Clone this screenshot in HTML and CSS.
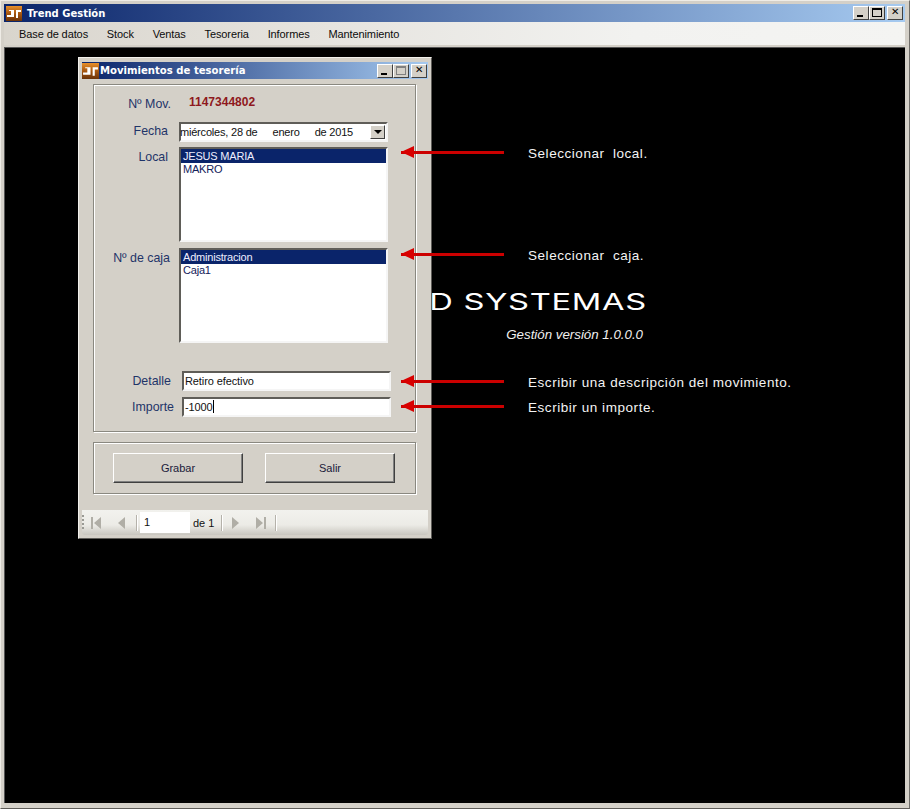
FILE: index.html
```html
<!DOCTYPE html>
<html lang="es">
<head>
<meta charset="utf-8">
<title>Trend Gestión</title>
<link rel="stylesheet" href="styles.css">
</head>
<body>
<svg class="defs" width="0" height="0">
  <defs>
    <linearGradient id="brown" x1="0" y1="0" x2="0" y2="1">
      <stop offset="0" stop-color="#e8902c"/>
      <stop offset="0.5" stop-color="#a8570f"/>
      <stop offset="1" stop-color="#6a3208"/>
    </linearGradient>
    <symbol id="logo" viewBox="0 0 16 15" preserveAspectRatio="none">
      <rect width="16" height="15" fill="url(#brown)"/>
      <path d="M1 9h4V5H3V4h5v7H1zM10 4h5v2h-3v6h-2z" fill="#fff"/>
    </symbol>
  </defs>
</svg>
<div class="app">
  <header class="titlebar">
    <svg class="logo"><use href="#logo"/></svg>
    <span class="title">Trend Gestión</span>
    <div class="wbtns">
      <span class="wbtn"><i class="g-min"></i></span>
      <span class="wbtn"><i class="g-max"></i></span>
      <span class="wbtn"><i class="g-close">✕</i></span>
    </div>
  </header>
  <nav class="menubar">
    <span>Base de datos</span><span>Stock</span><span>Ventas</span><span>Tesoreria</span><span>Informes</span><span>Mantenimiento</span>
  </nav>
  <main class="desk">
    <div class="brand">
      <div class="brand-name">TREND SYSTEMAS</div>
      <div class="brand-ver">Gestión versión 1.0.0.0</div>
    </div>

    <section class="dialog">
      <header class="dlg-title">
        <svg class="logo"><use href="#logo"/></svg>
        <span class="title">Movimientos de tesorería</span>
        <div class="wbtns">
          <span class="wbtn"><i class="g-min"></i></span>
          <span class="wbtn wbtn-off"><i class="g-max"></i></span>
          <span class="wbtn"><i class="g-close">✕</i></span>
        </div>
      </header>
      <div class="dlg-body">
        <div class="group g-main">
          <div class="row r-mov"><label class="lb">Nº Mov.</label><span class="movno">1147344802</span></div>
          <div class="row r-fecha"><label class="lb">Fecha</label>
            <div class="field date"><span class="d1">miércoles, 28 de</span><span class="d2">enero</span><span class="d3">de 2015</span><span class="dd"><i></i></span></div>
          </div>
          <div class="row r-local"><label class="lb">Local</label>
            <div class="field list"><div class="opt sel">JESUS MARIA</div><div class="opt">MAKRO</div></div>
          </div>
          <div class="row r-caja"><label class="lb">Nº de caja</label>
            <div class="field list"><div class="opt sel">Administracion</div><div class="opt">Caja1</div></div>
          </div>
          <div class="row r-det"><label class="lb">Detalle</label><div class="field text">Retiro efectivo</div></div>
          <div class="row r-imp"><label class="lb">Importe</label><div class="field text">-1000<b class="caret"></b></div></div>
        </div>
        <div class="group g-btns">
          <button class="btn">Grabar</button>
          <button class="btn">Salir</button>
        </div>
      </div>
      <footer class="nav">
        <span class="grip"></span>
        <svg class="nv" viewBox="0 0 12 14"><path d="M1 1h2v12H1zM11 1v12L4 7z"/></svg>
        <svg class="nv nv2" viewBox="0 0 12 14"><path d="M10 1v12L3 7z"/></svg>
        <span class="sep"></span>
        <span class="page">1</span>
        <span class="of">de 1</span>
        <span class="sep sep-b"></span>
        <svg class="nv nv3" viewBox="0 0 12 14"><path d="M2 1v12l7-6z"/></svg>
        <svg class="nv nv4" viewBox="0 0 12 14"><path d="M1 1v12l7-6zM9 1h2v12H9z"/></svg>
        <span class="sep sep-end"></span>
      </footer>
    </section>

    <div class="note n1"><span class="arrow"></span><span class="note-t wide">Seleccionar local.</span></div>
    <div class="note n2"><span class="arrow"></span><span class="note-t wide">Seleccionar caja.</span></div>
    <div class="note n3"><span class="arrow"></span><span class="note-t">Escribir una descripción del movimiento.</span></div>
    <div class="note n4"><span class="arrow"></span><span class="note-t">Escribir un importe.</span></div>
  </main>
</div>
</body>
</html>
```
FILE: styles.css
```css
* { box-sizing: border-box; }
html, body { margin: 0; height: 100%; }
body { width: 910px; height: 809px; overflow: hidden; font-family: "Liberation Sans", Arial, sans-serif; background: #d4d0c8; }
.defs { position: absolute; }

.app { width: 910px; height: 809px; display: flex; flex-direction: column; padding: 3px 4px 5px 3px; background: #d4d0c8; border-top: 1px solid #efece6; border-left: 1px solid #efece6; border-right: 1px solid #6e6c68; border-bottom: 1px solid #5e5c58; }

.titlebar { height: 18px; flex: none; display: flex; align-items: center; background: linear-gradient(90deg, #0a246a 0%, #a6caf0 100%); }
.logo { width: 16px; height: 15px; flex: none; margin-left: 2px; }
.title { font-weight: 700; color: #fff; margin-left: 5px; font-family: "DejaVu Sans", sans-serif; font-size: 10px; }
.wbtns { margin-left: auto; display: flex; margin-right: 2px; }
.wbtn { width: 16px; height: 14px; background: #d4d0c8; border: 1px solid; border-color: #fff #404040 #404040 #fff; position: relative; display: block; }
.wbtn + .wbtn:nth-child(2) { margin-right: 2px; }
.wbtn i { position: absolute; font-style: normal; color: #000; }
.g-min { left: 3px; bottom: 2px; width: 6px; height: 2px; background: #000; }
.g-max { left: 2px; top: 1px; width: 10px; height: 9px; border: 1px solid #000; border-top-width: 2px; }
.wbtn-off .g-max { border-color: #808080; }
.g-close { left: 3px; top: -1px; font-size: 10px; line-height: 12px; font-weight: 700; font-family: "DejaVu Sans", sans-serif; }

.menubar { height: 25px; flex: none; display: flex; align-items: center; gap: 18.8px; padding: 1px 0 0 15px; background: linear-gradient(90deg, #d9d5cd 0%, #f2f2f0 70%, #f4f4f2 100%); font-size: 11px; color: #0c0c0c; border-bottom: 2px solid #d4d0c8; letter-spacing: -.1px; }

.desk { flex: 1; position: relative; background: #000; border-top: 1px solid #555; border-left: 1px solid #555; overflow: hidden; }

.brand { position: absolute; left: 374px; top: 240px; width: 268px; color: #fff; text-align: right; }
.brand-name { font-family: Inter, sans-serif; font-weight: 400; font-size: 23px; line-height: 28px; white-space: nowrap; transform: scaleX(1.42); transform-origin: right center; letter-spacing: .5px; }
.brand-ver { font-style: italic; font-size: 13.3px; line-height: 15px; margin-top: 11px; padding-right: 4px; color: #f0f0f0; }

.dialog { position: absolute; left: 73px; top: 9px; width: 354px; height: 482px; display: flex; flex-direction: column; background: #d4d0c8; border: 1px solid; border-color: #f2f0ec #5e5c58 #5e5c58 #f2f0ec; padding: 4px 3px 3px; }
.dlg-title { height: 17px; flex: none; display: flex; align-items: center; background: linear-gradient(90deg, #0a246a 0%, #a6caf0 100%); }
.dlg-title .logo { margin-left: 0; width: 17px; height: 16px; }
.dlg-title .title { margin-left: 1px; font-size: 10.1px; }
.dlg-title .wbtns { margin-right: 1px; }

.dlg-body { flex: 1; padding: 5px 13px 0 11px; }
.group { width: 323px; border: 1px solid #8a8880; box-shadow: 1px 1px 0 #fff, inset 1px 1px 0 #fff; }
.g-main { height: 348px; padding-top: 9px; }
.g-btns { height: 52px; margin-top: 10px; display: flex; gap: 22px; padding: 10px 0 0 19px; }

.row { display: flex; align-items: flex-start; }
.lb { flex: none; text-align: right; font-size: 12.4px; line-height: 14px; color: #1f3468; }
.field { background: #fff; width: 209px; border: 2px solid; border-color: #5f5d58 #f5f5f5 #f5f5f5 #5f5d58; font-size: 11px; color: #111; }

.movno { font-weight: 700; font-size: 12px; line-height: 14px; color: #8e1820; margin-left: 18px; margin-top: -2px; }
.r-mov { height: 26px; padding-top: 3px; }
.r-mov .lb { width: 77px; }
.r-fecha { margin-top: 2px; }
.r-fecha .lb { width: 74px; margin-top: 2px; margin-right: 11px; }
.r-local { margin-top: 5px; }
.r-local .lb { width: 74px; margin-top: 3px; margin-right: 11px; }
.r-caja { margin-top: 6px; }
.r-caja .lb { width: 76px; margin-top: 3px; margin-right: 9px; }
.r-det { margin-top: 28px; }
.r-det .lb { width: 77px; margin-right: 11px; margin-top: 3px; }
.r-imp { margin-top: 6px; }
.r-imp .lb { width: 80px; margin-right: 8px; margin-top: 3px; }

.date { height: 20px; display: flex; align-items: center; position: relative; white-space: nowrap; line-height: 16px; letter-spacing: -.2px; }
.d1 { margin-left: -1px; }
.d2 { margin-left: 15px; }
.d3 { margin-left: 15px; }
.dd { position: absolute; right: 1px; top: 1px; width: 15px; height: 14px; background: #d4d0c8; border: 1px solid; border-color: #fff #404040 #404040 #fff; }
.dd i { position: absolute; left: 3px; top: 4px; border: 4px solid transparent; border-top-color: #000; border-bottom: 0; }

.list { height: 95px; }
.opt { height: 13px; line-height: 13px; padding: 0 2px; letter-spacing: -.2px; color: #14215a; }
.opt.sel { background: #0a246a; color: #eef; height: 14px; line-height: 14px; }

.text { height: 20px; line-height: 17px; padding-left: 1px; position: relative; letter-spacing: -.1px; }
.caret { display: inline-block; width: 1px; height: 13px; background: #000; vertical-align: -2px; }

.btn { width: 130px; height: 30px; background: #d4d0c8; border: 1px solid; border-color: #fff #404040 #404040 #fff; box-shadow: inset -1px -1px 0 #808080; font: 11px "Liberation Sans", sans-serif; color: #1a1a3a; padding: 0; margin: 0; }

.nav { height: 25px; flex: none; margin: 6px 0 0 0; display: flex; align-items: center; background: linear-gradient(180deg, #f2f2ee 0%, #ecebe6 60%, #c9c6bf 100%); border-radius: 0 0 3px 3px; font-size: 11px; color: #111; }
.grip { width: 2px; height: 15px; margin-right: 6px; background: repeating-linear-gradient(180deg, #9a9a94 0 2px, transparent 2px 4px); }
.nv { width: 12px; height: 14px; fill: #b0aea6; flex: none; }
.nv2 { margin-left: 13px; }
.sep { width: 1px; height: 16px; background: #b5b2aa; box-shadow: 1px 0 0 #fff; flex: none; margin-left: 9px; }
.page { width: 50px; height: 21px; line-height: 21px; background: #fff; padding-left: 4px; margin-left: 3px; }
.of { margin-left: 3px; width: 25px; }
.sep-b { margin-left: 3px; }
.nv3 { margin-left: 8px; }
.nv4 { margin-left: 13px; }
.sep-end { margin-left: 8px; }

.note { position: absolute; left: 396px; width: 420px; display: flex; align-items: center; height: 16px; color: #fff; }
.n1 { top: 96px; }
.n2 { top: 198px; }
.n3 { top: 325px; }
.n4 { top: 350px; }
.arrow { width: 103px; height: 3px; background: #cc0000; position: relative; flex: none; }
.arrow::before { content: ""; position: absolute; left: 0; top: -5px; border-style: solid; border-width: 6.5px 13px 6.5px 0; border-color: transparent #d80000 transparent transparent; }
.note-t { margin-left: 24px; margin-top: 2px; font-size: 13.5px; letter-spacing: .55px; color: #f4f4f4; white-space: nowrap; }
.wide { word-spacing: 4px; }
```
